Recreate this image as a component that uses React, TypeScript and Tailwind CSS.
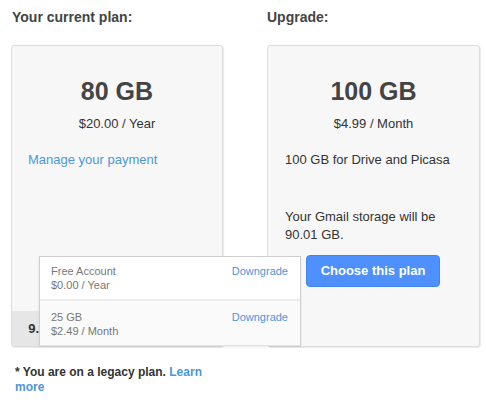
import React from "react";

export default function App() {
  return (
    <div className="relative w-[486px] h-[404px] bg-white font-['Liberation_Sans',Arial,sans-serif] text-[#333] overflow-hidden">
      <div className="flex gap-[44px] pl-[11px] pt-[8px]">
        {/* Left column */}
        <div className="w-[212px] flex flex-col">
          <div className="h-[37px] pl-[1px] text-[14px] leading-[18px] font-bold text-[#444]">Your current plan:</div>
          <div className="h-[302px] flex flex-col rounded-[3px] border border-[#dcdcdc] bg-[#f7f7f7] shadow-[1px_1px_1px_rgba(0,0,0,0.08)]">
            <div className="pt-[29px] px-[16px]">
              <div className="text-center text-[25px] leading-[32px] font-bold text-[#444]">80 GB</div>
              <div className="mt-[8px] text-center text-[13px] leading-[18px] text-[#333]">$20.00 / Year</div>
              <div className="mt-[18px] text-[13px] leading-[18px] text-[#4a97db]">Manage your payment</div>
            </div>
            <div className="mt-auto flex">
              <div className="w-[27px] h-[35px] overflow-hidden rounded-bl-[3px] bg-[#e6e6e6] flex items-center justify-end text-[13px] font-bold text-[#333] whitespace-nowrap">
                9.
              </div>
            </div>
          </div>
          <div className="mt-[18px] pl-[4px] w-[210px] text-[12px] leading-[15px] font-bold text-[#333]">
            * You are on a legacy plan. <span className="text-[#4a97db]">Learn more</span>
          </div>
        </div>

        {/* Right column */}
        <div className="w-[213px] flex flex-col">
          <div className="h-[37px] text-[14px] leading-[18px] font-bold text-[#444]">Upgrade:</div>
          <div className="h-[302px] flex flex-col rounded-[3px] border border-[#dcdcdc] bg-[#f7f7f7] shadow-[1px_1px_1px_rgba(0,0,0,0.08)] pt-[29px] px-[17px]">
            <div className="text-center text-[25px] leading-[32px] font-bold text-[#444]">100 GB</div>
            <div className="mt-[8px] text-center text-[13px] leading-[18px] text-[#333]">$4.99 / Month</div>
            <div className="mt-[18px] text-[13px] leading-[18px] text-[#333]">100 GB for Drive and Picasa</div>
            <div className="mt-[39px] text-[13px] leading-[18px] text-[#333]">
              Your Gmail storage will be
              <br />
              90.01 GB.
            </div>
            <button className="mt-[11px] ml-[21px] w-[134px] h-[32px] rounded-[4px] border border-[#3f86f0] bg-[#4d90fe] text-white text-[13px] font-bold">
              Choose this plan
            </button>
          </div>
        </div>
      </div>

      {/* Dropdown overlay */}
      <div className="absolute left-[39px] top-[256px] w-[262px] border border-[#cfcfcf] border-b-[#e2e2e2] bg-white shadow-[0_1px_2px_rgba(0,0,0,0.1)] text-[11px] leading-[14px]">
        <div className="flex justify-between h-[44px] pt-[7px] pl-[11px] pr-[12px] border-b-2 border-[#ececec] bg-white">
          <div className="text-[#777]">
            <div>Free Account</div>
            <div>$0.00 / Year</div>
          </div>
          <div className="text-[#4a97db]">Downgrade</div>
        </div>
        <div className="flex justify-between h-[44px] pt-[9px] pl-[11px] pr-[12px] bg-[#fafafa]">
          <div className="text-[#777]">
            <div>25 GB</div>
            <div>$2.49 / Month</div>
          </div>
          <div className="text-[#4a97db]">Downgrade</div>
        </div>
      </div>
    </div>
  );
}
